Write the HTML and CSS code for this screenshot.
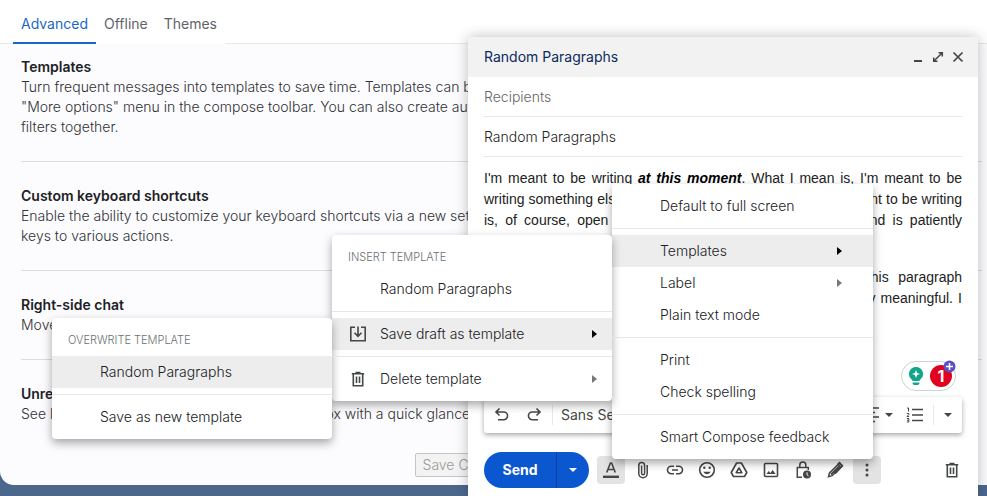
FILE: index.html
```html
<!DOCTYPE html>
<html lang="en">
<head>
    <meta charset="UTF-8">
    <meta name="viewport" content="width=device-width, initial-scale=1.0">
    <title>Settings</title>
    <link rel="stylesheet" href="styles.css">
</head>
<body>
    <!-- Settings page -->
    <main class="settings">
        <nav class="tabs">
            <a href="#advanced" class="tab active">Advanced</a>
            <a href="#offline" class="tab">Offline</a>
            <a href="#themes" class="tab">Themes</a>
        </nav>
        <div class="options">
            <section class="option">
                <h2>Templates</h2>
                <p>Turn frequent messages into templates to save time. Templates can be<br>"More options" menu in the compose toolbar. You can also create auto<br>filters together.</p>
            </section>
            <section class="option">
                <h2>Custom keyboard shortcuts</h2>
                <p>Enable the ability to customize your keyboard shortcuts via a new setti<br>keys to various actions.</p>
            </section>
            <section class="option">
                <h2>Right-side chat</h2>
                <p>Move the chat to the right side of the inbox.</p>
            </section>
            <section class="option">
                <h2>Unread message icon</h2>
                <p>See how many unread messages are in the inbox with a quick glance at</p>
            </section>
        </div>
        <div class="actions">
            <button class="save-btn" disabled>Save Changes</button>
        </div>
    </main>

    <!-- Compose window -->
    <div class="compose">
        <div class="compose-header">
            <h1>Random Paragraphs</h1>
            <button class="win-btn" aria-label="Minimize">
                <svg width="12" height="12" viewBox="0 0 12 12"><path d="M2 10h8" stroke="currentColor" stroke-width="2"/></svg>
            </button>
            <button class="win-btn" aria-label="Full screen">
                <svg width="12" height="12" viewBox="0 0 12 12" fill="none" stroke="currentColor" stroke-width="1.5"><path d="M6.5 1.7h3.8v3.8M10.3 1.7L1.7 10.3M1.7 6.5v3.8h3.8"/></svg>
            </button>
            <button class="win-btn" aria-label="Close">
                <svg width="12" height="12" viewBox="0 0 12 12" stroke="currentColor" stroke-width="1.7"><path d="M1.5 1.5l9 9M10.5 1.5l-9 9"/></svg>
            </button>
        </div>
        <div class="fields">
            <input type="text" aria-label="Recipients" placeholder="Recipients">
            <input type="text" aria-label="Subject" value="Random Paragraphs">
        </div>
        <div class="message" contenteditable="true" role="textbox" aria-label="Message body" spellcheck="false">
            <p>I'm meant to be writing <b><i>at this moment</i></b>. What I mean is, I'm meant to be writing something else at this moment. The document I'm meant to be writing is, of course, open in another program on my computer and is patiently awaiting my attention.</p>
            <p>Yet here I am plonking down senseless sentiments in this paragraph because it's easier to do than to work on anything particularly meaningful. I am grateful for the distraction.</p>
        </div>

        <div class="checker">
            <svg width="16" height="20" viewBox="0 0 16 20">
                <path d="M8 1a7 7 0 0 1 4.6 12.3c-.7.6-1.1 1-1.1 1.7h-7c0-.7-.4-1.1-1.1-1.7A7 7 0 0 1 8 1z" fill="#12a58c"/>
                <path d="M4.500 16.500h7v.5a2 2 0 0 1-2 2h-3a2 2 0 0 1-2-2z" fill="#12a58c"/>
                <path d="M8 4l1.100 2.900L12 8l-2.900 1.100L8 12l-1.100-2.900L4 8l2.900-1.100z" fill="#fff"/>
            </svg>
            <span class="count">1
                <svg class="plus" width="13" height="13" viewBox="0 0 13 13">
                    <circle cx="6.500" cy="6.500" r="6" fill="#5a4fc4"/>
                    <path d="M6.500 3v7M3 6.500h7" stroke="#fff" stroke-width="1.500"/>
                </svg>
            </span>
        </div>

        <div class="format-bar">
            <button aria-label="Undo">
                <svg width="16" height="16" viewBox="0 0 16 16" fill="none" stroke="currentColor" stroke-width="1.600"><path d="M5.500 1.500L2 5l3.500 3.500M2.500 5h7.200a3.800 3.800 0 0 1 0 7.700H4"/></svg>
            </button>
            <button aria-label="Redo">
                <svg width="16" height="16" viewBox="0 0 16 16" fill="none" stroke="currentColor" stroke-width="1.600"><path d="M10.500 1.500L14 5l-3.500 3.500M13.500 5H6.300a3.800 3.800 0 0 0 0 7.700H12"/></svg>
            </button>
            <span class="divider"></span>
            <button class="font-btn">Sans Serif</button>
            <span class="spacer"></span>
            <button class="align-btn" aria-label="Align">
                <svg width="16" height="16" viewBox="0 0 16 16" stroke="currentColor" stroke-width="1.500"><path d="M1 1h14M1 5.500h10M1 10h14M1 14.500h10"/></svg>
                <svg width="8" height="4" viewBox="0 0 8 4"><path d="M0 0h8L4 4z" fill="currentColor"/></svg>
            </button>
            <button aria-label="Numbered list">
                <svg width="18" height="16" viewBox="0 0 18 16"><path d="M6 2.500h11M6 8h11M6 13.500h11" stroke="currentColor" stroke-width="1.500"/><path d="M1 1h1.500v3.500M.8 6.500h2v1L1 9.500h2M.8 11.500h2v3.500h-2M1 13.200h1.800" fill="none" stroke="currentColor"/></svg>
            </button>
            <span class="divider"></span>
            <button aria-label="More formatting">
                <svg width="8" height="4" viewBox="0 0 8 4"><path d="M0 0h8L4 4z" fill="currentColor"/></svg>
            </button>
        </div>

        <div class="toolbar">
            <div class="send">
                <button class="send-btn">Send</button>
                <button class="send-more" aria-label="More send options">
                    <svg width="8" height="4" viewBox="0 0 8 4"><path d="M0 0h8L4 4z" fill="currentColor"/></svg>
                </button>
            </div>
            <button class="tool on" aria-label="Formatting options">
                <svg width="18" height="18" viewBox="0 0 18 18" fill="none" stroke="currentColor"><path d="M4.700 11.500L8.400 2h1.200l3.700 9.500M6 8.500h6" stroke-width="1.600"/><path d="M1 15.800h16" stroke-width="2.400"/></svg>
            </button>
            <button class="tool" aria-label="Attach files">
                <svg width="18" height="18" viewBox="0 0 18 18" fill="none" stroke="currentColor" stroke-width="1.500"><path d="M13.200 4v8.500a4.200 4.200 0 0 1-8.400 0V4.500a2.900 2.900 0 0 1 5.800 0v7.700a1.500 1.500 0 0 1-3 0V4.500"/></svg>
            </button>
            <button class="tool" aria-label="Insert link">
                <svg width="18" height="18" viewBox="0 0 18 18" fill="none" stroke="currentColor" stroke-width="1.600"><path d="M8 5.200H5.300a3.800 3.800 0 0 0 0 7.600H8M10 5.200h2.700a3.800 3.800 0 0 1 0 7.600H10M6 9h6"/></svg>
            </button>
            <button class="tool" aria-label="Insert emoji">
                <svg width="18" height="18" viewBox="0 0 18 18" fill="none" stroke="currentColor" stroke-width="1.600"><circle cx="9" cy="9" r="7.300"/><path d="M5.200 10.800a4.200 4.200 0 0 0 7.600 0z" fill="currentColor" stroke="none"/><circle cx="6.300" cy="6.700" r="1.200" fill="currentColor" stroke="none"/><circle cx="11.700" cy="6.700" r="1.200" fill="currentColor" stroke="none"/></svg>
            </button>
            <button class="tool" aria-label="Insert files using Drive">
                <svg width="18" height="18" viewBox="0 0 18 18" fill="none" stroke="currentColor" stroke-width="1.600" stroke-linejoin="round"><path d="M6.600 2h4.800l5.400 9.500-2.300 4h-11l-2.300-4z"/><path d="M9 7l2.800 4.700H6.200z"/></svg>
            </button>
            <button class="tool" aria-label="Insert photo">
                <svg width="18" height="18" viewBox="0 0 18 18"><rect x="2.500" y="2.500" width="13" height="13" rx="1" fill="none" stroke="currentColor" stroke-width="1.600"/><path d="M4.500 13l2.200-3 1.700 2 2.300-3 2.900 4z" fill="currentColor"/></svg>
            </button>
            <button class="tool" aria-label="Toggle confidential mode">
                <svg width="18" height="18" viewBox="0 0 18 18" fill="none" stroke="currentColor" stroke-width="1.500"><path d="M8 16.200H3.300V6.500h11V9M5.800 6.500V4a3 3 0 0 1 6 0v2.500"/><circle cx="13" cy="13.500" r="4" fill="currentColor" stroke="none"/><path d="M13 11.300v2.400l1.500 1.300" stroke="#fff" stroke-width="1"/></svg>
            </button>
            <button class="tool" aria-label="Insert signature">
                <svg width="18" height="18" viewBox="0 0 18 18" fill="none" stroke="currentColor" stroke-width="1.500"><path d="M2.500 15.700l1-3.700L12 3.500l2.700 2.700-8.500 8.500z"/><path d="M5 13.500l8-8M12 3.500l1.500-1.500 2.700 2.700L9 12.500" stroke-width="2"/></svg>
            </button>
            <button class="tool on more-btn" aria-label="More options">
                <svg width="18" height="18" viewBox="0 0 18 18" fill="currentColor"><circle cx="9" cy="4" r="1.500"/><circle cx="9" cy="9" r="1.500"/><circle cx="9" cy="14" r="1.500"/></svg>
            </button>
            <button class="tool discard" aria-label="Discard draft">
                <svg width="18" height="18" viewBox="0 0 18 18" fill="none" stroke="currentColor" stroke-width="1.600"><path d="M4.300 4v11.700h9.400V4M2.800 3.700h12.400M6.500 2.500h5M7.500 6.500v6.500M10.500 6.500v6.500"/></svg>
            </button>
        </div>

        <!-- More options menu -->
        <ul class="menu more-menu">
            <li><button>Default to full screen</button></li>
            <li class="separator"></li>
            <li class="open">
                <button>Templates <span class="arrow"></span></button>
                <ul class="menu submenu">
                    <li class="menu-title">INSERT TEMPLATE</li>
                    <li><button>Random Paragraphs</button></li>
                    <li class="separator"></li>
                    <li class="open">
                        <button>
                            <svg class="icon" width="18" height="18" viewBox="0 0 18 18" fill="none" stroke="currentColor" stroke-width="1.600"><path d="M6 2.300H1.800v13.400h14.400V2.300H12M9 1.500v9.500M5.500 7.800L9 11.300l3.500-3.500"/></svg>
                            Save draft as template <span class="arrow"></span>
                        </button>
                        <ul class="menu submenu">
                            <li class="menu-title">OVERWRITE TEMPLATE</li>
                            <li class="open"><button>Random Paragraphs</button></li>
                            <li class="separator"></li>
                            <li><button>Save as new template</button></li>
                        </ul>
                    </li>
                    <li class="separator"></li>
                    <li>
                        <button>
                            <svg class="icon" width="18" height="18" viewBox="0 0 18 18" fill="none" stroke="currentColor" stroke-width="1.600"><path d="M4.300 4v11.700h9.400V4M2.800 3.700h12.400M6.500 2.500h5M7.500 6.500v6.500M10.500 6.500v6.500"/></svg>
                            Delete template <span class="arrow"></span>
                        </button>
                    </li>
                </ul>
            </li>
            <li><button>Label <span class="arrow"></span></button></li>
            <li><button>Plain text mode</button></li>
            <li class="separator"></li>
            <li><button>Print</button></li>
            <li><button>Check spelling</button></li>
            <li class="separator"></li>
            <li><button>Smart Compose feedback</button></li>
        </ul>
    </div>
</body>
</html>
```
FILE: styles.css
```css
* {
    margin: 0;
    padding: 0;
    box-sizing: border-box;
}

body {
    display: flex;
    flex-direction: column;
    height: 100vh;
    padding-bottom: 11px;
    overflow: hidden;
    background-color: #4c678c;
    font-family: Inter, sans-serif;
    font-size: 14px;
    font-weight: 300;
    line-height: 20px;
    color: #303134;
}

button,
input {
    border: none;
    background: none;
    font: inherit;
    color: inherit;
    outline: none;
}

button {
    cursor: pointer;
}

svg {
    display: block;
    flex-shrink: 0;
}

.settings {
    flex: 1;
    display: flex;
    flex-direction: column;
    min-height: 0;
    overflow: hidden;
    background-color: #fcfcff;
    border-bottom-left-radius: 14px;
}

.tabs {
    display: flex;
    height: 44px;
    padding-left: 13px;
    background: linear-gradient(#e6e8eb, #e6e8eb) bottom / 100% 1px no-repeat #fff;
    font-weight: 400;
}

.tab {
    padding: 14px 8px 0;
    background-color: #fff;
    color: #5f6368;
    text-decoration: none;
}

.tab.active {
    border-bottom: 2px solid #1b68c4;
    color: #1b68c4;
}

.options {
    padding: 13px 5px 0 21px;
    white-space: nowrap;
}

.option {
    padding-bottom: 24px;
}

.option + .option {
    padding-top: 24px;
    border-top: 1px solid #dcdde0;
}

.option h2 {
    font-size: 14px;
    font-weight: 600;
    color: #202124;
}

.actions {
    padding: 5px 0 0 42%;
}

.save-btn {
    height: 24px;
    padding: 0 7px;
    border: 1px solid #c4c4c6;
    border-radius: 2px;
    background-color: #f3f3f4;
}

.save-btn:disabled {
    color: #999;
}

.compose {
    position: absolute;
    top: 37px;
    right: 9px;
    bottom: 0;
    display: flex;
    flex-direction: column;
    width: 510px;
    background-color: #fff;
    border-radius: 4px 4px 0 0;
    box-shadow: 0 0 14px rgba(0, 0, 0, 0.25);
}

.compose-header {
    display: flex;
    align-items: center;
    gap: 8px;
    height: 40px;
    padding: 0 14px 0 16px;
    background-color: #f2f2f2;
    border-radius: 4px 4px 0 0;
}

.compose-header h1 {
    flex: 1;
    font-size: 14px;
    font-weight: 400;
    color: #0d2a5c;
}

.win-btn {
    color: #444;
}

.fields {
    display: flex;
    flex-direction: column;
    padding: 0 16px;
}

.fields input {
    height: 40px;
    border-bottom: 1px solid #e8e8e8;
    color: #222;
}

.fields input::placeholder {
    color: #666;
}

.message {
    flex: 1;
    min-height: 0;
    padding: 11px 16px 0;
    overflow: hidden;
    font-family: "Liberation Sans", Arial, sans-serif;
    font-weight: 400;
    line-height: 21px;
    text-align: justify;
    color: #222;
    outline: none;
}

.message p {
    margin-bottom: 15px;
}

.message b {
    color: #000;
}

.checker {
    display: flex;
    align-items: center;
    align-self: flex-end;
    gap: 6px;
    height: 30px;
    margin: 0 22px 6px 0;
    padding: 0 3px 0 6px;
    border: 1px solid #ccd5d5;
    border-radius: 15px;
}

.count {
    position: relative;
    width: 22px;
    height: 22px;
    border-radius: 50%;
    background-color: #e0021f;
    color: #fff;
    font-size: 16px;
    font-weight: 700;
    line-height: 22px;
    text-align: center;
}

.plus {
    position: absolute;
    top: -5px;
    right: -4px;
}

.format-bar {
    display: flex;
    align-items: center;
    height: 36px;
    margin: 0 16px;
    border-radius: 3px;
    box-shadow: 0 2px 5px rgba(0, 0, 0, 0.35);
    color: #444746;
}

.format-bar button {
    display: flex;
    align-items: center;
    justify-content: center;
    width: 28px;
    height: 28px;
    margin-left: 4px;
}

.format-bar .font-btn {
    justify-content: flex-start;
    width: 100px;
    padding-left: 8px;
    font-weight: 400;
}

.format-bar .align-btn {
    gap: 5px;
    width: 38px;
}

.divider {
    width: 1px;
    height: 20px;
    margin-left: 4px;
    background-color: #e8e8e8;
}

.format-bar .divider + button {
    margin-left: 0;
}

.spacer {
    flex: 1;
}

.toolbar {
    display: flex;
    align-items: center;
    gap: 4px;
    margin: 19px 12px 8px 16px;
    color: #444746;
}

.send {
    display: flex;
    height: 36px;
    margin-right: 4px;
    border-radius: 18px;
    overflow: hidden;
    background-color: #0b57d0;
    color: #fff;
}

.send-btn {
    width: 72px;
    font-weight: 700;
}

.send-more {
    display: flex;
    align-items: center;
    width: 33px;
    padding-left: 12px;
    border-left: 1px solid #0a3f98;
}

.tool {
    display: flex;
    align-items: center;
    justify-content: center;
    width: 28px;
    height: 28px;
    border-radius: 4px;
}

.tool.on {
    background-color: #e3e3e3;
}

.discard {
    margin-left: auto;
}

.menu {
    position: absolute;
    padding: 6px 0;
    list-style: none;
    background-color: #fff;
    border-radius: 4px;
    box-shadow: 0 4px 10px rgba(0, 0, 0, 0.35);
    color: #202124;
}

.more-menu {
    right: 105px;
    bottom: 37px;
    width: 261px;
}

.submenu {
    top: 0;
    right: 100%;
    width: 280px;
}

.menu li {
    position: relative;
}

.menu button {
    display: flex;
    align-items: center;
    width: 100%;
    height: 32px;
    padding: 0 15px 0 48px;
    text-align: left;
}

.more-menu > li > button {
    padding-right: 31px;
}

.menu .open > button {
    background-color: #ededed;
}

.menu-title {
    padding: 0 16px;
    font-size: 11px;
    line-height: 32px;
    color: #6a6f74;
}

.menu .separator {
    height: 1px;
    margin: 6px 0;
    background-color: #e6e6e6;
}

.icon {
    margin: 0 13px 0 -31px;
    color: #444746;
}

.arrow {
    margin-left: auto;
    border: 4px solid transparent;
    border-right: none;
    border-left: 5px solid #777;
}

.open > button > .arrow {
    border-left-color: #000;
}
```
